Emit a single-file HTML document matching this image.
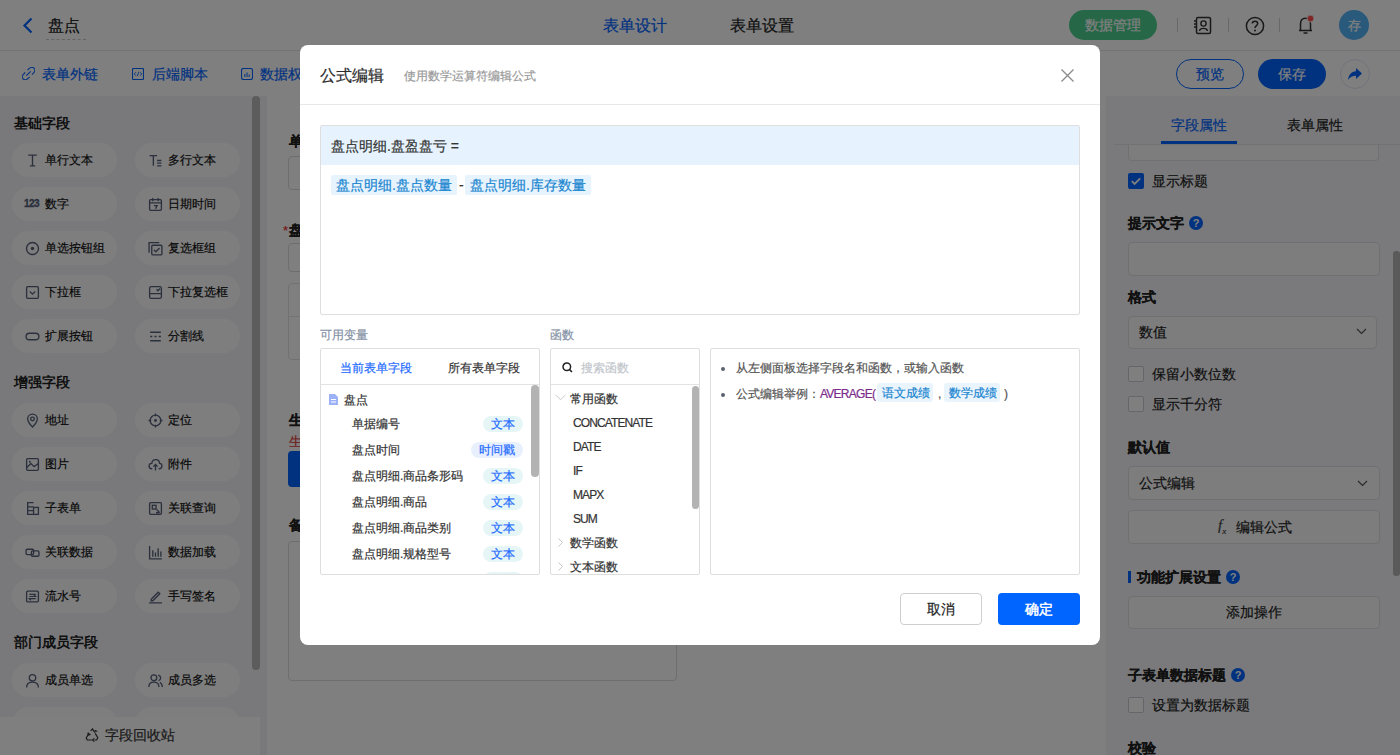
<!DOCTYPE html>
<html><head><meta charset="utf-8">
<style>
*{box-sizing:border-box;margin:0;padding:0}
html,body{width:1400px;height:755px;overflow:hidden;background:#fff;font-family:"Liberation Sans",sans-serif;color:#333}
.a{position:absolute}
.t{position:absolute;white-space:nowrap;line-height:1;-webkit-text-stroke:0.2px currentColor}
.pill span,.tg,.tg2,.vt,.fn{-webkit-text-stroke:0.2px currentColor}
#hdr{left:0;top:0;width:1400px;height:51px;background:#fff;border-bottom:1px solid #e4e6ea}
#bar2{left:0;top:51px;width:1400px;height:45px;background:#fff}
#lp{left:0;top:96px;width:268px;height:659px;background:#f2f3f6}
#rp{left:1106px;top:96px;width:294px;height:659px;background:#f4f5f8}
.pill{position:absolute;width:105px;height:34px;border-radius:17px;background:#fdfdfe;font-size:12px;color:#111}
.pill svg{position:absolute;left:13px;top:9.5px}
.pill span{position:absolute;left:33px;top:11px;line-height:12px;white-space:nowrap}
.sec{position:absolute;left:14px;font-size:14px;font-weight:bold;color:#1f1f1f;line-height:14px;white-space:nowrap}
#ov{left:0;top:0;width:1400px;height:755px;background:rgba(0,0,0,.5)}
#modal{left:300px;top:45px;width:800px;height:600px;background:#fff;border-radius:8px;overflow:hidden}
</style></head><body>
<style>
.rq{width:14px;height:14px;border-radius:7px;background:#0064ff;color:#fff;font-size:11px;font-weight:bold;text-align:center;line-height:14px}
.rq::after{content:"?"}
.inp{border:1px solid #e0e1e5;border-radius:4px;background:#fafafb}
.cb{width:16px;height:16px;border:1px solid #c9ccd3;border-radius:2px;background:#fff}
.tg{position:absolute;height:20px;background:#e8f4fd;color:#1a86d0;font-size:14px;line-height:20px;padding-left:5px;white-space:nowrap;border-radius:2px}
.tg2{position:absolute;height:19px;background:#eaf4fd;color:#1a86d0;font-size:12px;line-height:17px;padding-top:2px;padding-left:5px;white-space:nowrap;border-radius:3px}
.vt{position:absolute;height:16px;border-radius:8px;background:#e6f6f6;color:#1f6bff;font-size:12px;line-height:16px;text-align:center;white-space:nowrap}
.fn{position:absolute;left:22px;font-size:12px;color:#333;line-height:12px;letter-spacing:-0.9px;white-space:nowrap}
</style>
</head><body>
<!-- header -->
<div id="hdr" class="a">
  <svg class="a" style="left:22px;top:17px" width="12" height="17" viewBox="0 0 12 17"><path d="M9.5 1.5 L2.5 8.5 L9.5 15.5" fill="none" stroke="#0064ff" stroke-width="2.2"/></svg>
  <div class="t" style="left:48px;top:18px;font-size:16px;color:#222">盘点</div>
  <div class="a" style="left:46px;top:39px;width:40px;height:0;border-top:1px dashed #c8c8c8"></div>
  <div class="t" style="left:603px;top:18px;font-size:16px;color:#0064ff">表单设计</div>
  <div class="t" style="left:730px;top:18px;font-size:16px;color:#222">表单设置</div>
  <div class="a" style="left:1069px;top:10px;width:88px;height:30px;border-radius:15px;background:#4ccf8f"></div>
  <div class="t" style="left:1085px;top:18px;font-size:14px;color:#fff">数据管理</div>
  <div class="a" style="left:1177px;top:18px;width:1px;height:14px;background:#d0d0d0"></div>
  <div class="a" style="left:1228px;top:18px;width:1px;height:14px;background:#d0d0d0"></div>
  <div class="a" style="left:1279px;top:18px;width:1px;height:14px;background:#d0d0d0"></div>
  <svg class="a" style="left:1192px;top:16px" width="20" height="19" viewBox="0 0 20 19"><rect x="4.5" y="1.5" width="14" height="16" rx="1.5" fill="none" stroke="#333" stroke-width="1.5"/><circle cx="11.5" cy="7.5" r="2.6" fill="none" stroke="#333" stroke-width="1.4"/><path d="M7.5 15 C8 11.5 15 11.5 15.5 15" fill="none" stroke="#333" stroke-width="1.4"/><path d="M2 5h3M2 8h3M2 11h3" stroke="#333" stroke-width="1.3"/></svg>
  <svg class="a" style="left:1245px;top:16px" width="20" height="20" viewBox="0 0 20 20"><circle cx="10" cy="10" r="8.6" fill="none" stroke="#333" stroke-width="1.5"/><path d="M7.3 7.6 C7.3 4.6 12.7 4.6 12.7 7.6 C12.7 9.6 10 9.6 10 12" fill="none" stroke="#333" stroke-width="1.5"/><circle cx="10" cy="14.6" r="1" fill="#333"/></svg>
  <svg class="a" style="left:1296px;top:14px" width="20" height="22" viewBox="0 0 20 22"><path d="M3 16.5 h13 M4.5 16.5 V10 C4.5 6.5 6.5 4.2 9.5 4.2 C12.5 4.2 14.5 6.5 14.5 10 V16.5" fill="none" stroke="#333" stroke-width="1.5"/><path d="M7.5 19 h4" stroke="#333" stroke-width="1.5"/><circle cx="14.5" cy="4.5" r="3.4" fill="#ff4d4f" stroke="#fff" stroke-width="0.8"/></svg>
  <div class="a" style="left:1339px;top:10px;width:30px;height:30px;border-radius:15px;background:#52b2f6"></div>
  <div class="t" style="left:1348px;top:19px;font-size:13px;color:#fff">存</div>
</div>
<!-- bar2 -->
<div id="bar2" class="a">
  <svg class="a" style="left:22px;top:16px" width="13" height="13" viewBox="0 0 13 13"><path d="M5.5 3.2 L7.3 1.4 C8.6 0.1 10.9 0.1 12 1.2 C13 2.3 13 4.5 11.7 5.8 L9.9 7.6 M7.6 9.9 L5.8 11.7 C4.5 13 2.3 13 1.2 12 C0.1 10.9 0.1 8.6 1.4 7.3 L3.2 5.5 M4.3 8.7 L8.7 4.3" fill="none" stroke="#0064ff" stroke-width="1.1"/></svg>
  <div class="t" style="left:42px;top:16px;font-size:14px;color:#0064ff">表单外链</div>
  <svg class="a" style="left:132px;top:17px" width="12" height="12" viewBox="0 0 12 12"><rect x="0.5" y="0.5" width="11" height="11" rx="1" fill="none" stroke="#0064ff" stroke-width="1.1"/><path d="M3.8 4.3L2.3 6l1.5 1.7M8.2 4.3L9.7 6 8.2 7.7M6.8 3.8L5.2 8.2" fill="none" stroke="#0064ff" stroke-width="0.9"/></svg>
  <div class="t" style="left:152px;top:16px;font-size:14px;color:#0064ff">后端脚本</div>
  <svg class="a" style="left:241px;top:17px" width="12" height="12" viewBox="0 0 12 12"><rect x="0.5" y="0.5" width="11" height="11" rx="2" fill="none" stroke="#0064ff" stroke-width="1.1"/><path d="M3.8 6v3M6 4.5v4.5M8.2 6.5v2.5" stroke="#0064ff" stroke-width="1"/></svg>
  <div class="t" style="left:260px;top:16px;font-size:14px;color:#0064ff">数据权限</div>
  <div class="a" style="left:1176px;top:8px;width:68px;height:30px;border-radius:15px;border:1px solid #0064ff"></div>
  <div class="t" style="left:1196px;top:16px;font-size:14px;color:#0064ff">预览</div>
  <div class="a" style="left:1258px;top:8px;width:68px;height:30px;border-radius:15px;background:#0064ff"></div>
  <div class="t" style="left:1278px;top:16px;font-size:14px;color:#fff">保存</div>
  <div class="a" style="left:1340px;top:8px;width:30px;height:30px;border-radius:15px;border:1px solid #dfe6f3;background:#fff"></div>
  <svg class="a" style="left:1347px;top:15px" width="16" height="16" viewBox="0 0 16 16"><path d="M9 2 L15 7.5 L9 13 V9.8 C5.5 9.8 3 10.8 1 14 C1.5 9 4.5 5.6 9 5.3 Z" fill="#0064ff"/></svg>
</div>
<div id="lp" class="a">
<div class="sec" style="top:20px">基础字段</div>
<div class="pill" style="left:12px;top:47px"><svg viewBox="0 0 14 14" width="15" height="15"><path d="M3 2h8M7 2v10M4.5 12h5" fill="none" stroke="#56607a" stroke-width="1.25"/></svg><span>单行文本</span></div>
<div class="pill" style="left:135px;top:47px"><svg viewBox="0 0 14 14" width="15" height="15"><path d="M1.5 2.5h7M5 2.5v9.5M8.5 7h4M8.5 9.5h4M8.5 12h4" fill="none" stroke="#56607a" stroke-width="1.25"/></svg><span>多行文本</span></div>
<div class="pill" style="left:12px;top:91px"><svg viewBox="0 0 16 14" width="16" height="14" style="left:12px"><text x="0" y="9.5" font-size="10" font-weight="bold" letter-spacing="-0.5" fill="#56607a" stroke="#56607a" stroke-width="0.35" font-family="Liberation Sans">123</text></svg><span>数字</span></div>
<div class="pill" style="left:135px;top:91px"><svg viewBox="0 0 14 14" width="15" height="15"><rect x="1.5" y="2.5" width="11" height="10" rx="1" fill="none" stroke="#56607a" stroke-width="1.25"/><path d="M1.5 5.5h11M4.5 1v3M9.5 1v3M5.5 8h3l-1.5 3" fill="none" stroke="#56607a" stroke-width="1.25"/></svg><span>日期时间</span></div>
<div class="pill" style="left:12px;top:135px"><svg viewBox="0 0 14 14" width="15" height="15"><circle cx="7" cy="7" r="5.6" fill="none" stroke="#56607a" stroke-width="1.25"/><circle cx="7" cy="7" r="1.6" fill="#56607a"/></svg><span>单选按钮组</span></div>
<div class="pill" style="left:135px;top:135px"><svg viewBox="0 0 14 14" width="15" height="15"><path d="M1 11V1.5h9.5" fill="none" stroke="#56607a" stroke-width="1.25"/><rect x="3.5" y="4" width="9.5" height="9" rx="1" fill="none" stroke="#56607a" stroke-width="1.25"/><path d="M5.5 8.3l1.8 1.8 3.5-3.5" fill="none" stroke="#56607a" stroke-width="1.25"/></svg><span>复选框组</span></div>
<div class="pill" style="left:12px;top:179px"><svg viewBox="0 0 14 14" width="15" height="15"><rect x="1.5" y="1.5" width="11" height="11" rx="1" fill="none" stroke="#56607a" stroke-width="1.25"/><path d="M4.5 6l2.5 2.5 2.5-2.5" fill="none" stroke="#56607a" stroke-width="1.25"/></svg><span>下拉框</span></div>
<div class="pill" style="left:135px;top:179px"><svg viewBox="0 0 14 14" width="15" height="15"><rect x="1.5" y="1.5" width="11" height="11" rx="1.5" fill="none" stroke="#56607a" stroke-width="1.25"/><path d="M1.5 8h11M8 4l1.3 1.3 2-2" fill="none" stroke="#56607a" stroke-width="1.25"/></svg><span>下拉复选框</span></div>
<div class="pill" style="left:12px;top:223px"><svg viewBox="0 0 14 14" width="15" height="15"><rect x="1" y="4" width="12" height="6" rx="3" fill="none" stroke="#56607a" stroke-width="1.25"/></svg><span>扩展按钮</span></div>
<div class="pill" style="left:135px;top:223px"><svg viewBox="0 0 14 14" width="15" height="15"><path d="M2 3h10M2 7h2M6 7h2M10 7h2M2 11h10" fill="none" stroke="#56607a" stroke-width="1.25"/></svg><span>分割线</span></div>
<div class="sec" style="top:279px">增强字段</div>
<div class="pill" style="left:12px;top:307px"><svg viewBox="0 0 14 14" width="15" height="15"><path d="M7 13C7 13 2.5 8.5 2.5 5.5C2.5 3 4.5 1 7 1C9.5 1 11.5 3 11.5 5.5C11.5 8.5 7 13 7 13Z" fill="none" stroke="#56607a" stroke-width="1.25"/><circle cx="7" cy="5.5" r="1.7" fill="none" stroke="#56607a" stroke-width="1.25"/></svg><span>地址</span></div>
<div class="pill" style="left:135px;top:307px"><svg viewBox="0 0 14 14" width="15" height="15"><circle cx="7" cy="7" r="5" fill="none" stroke="#56607a" stroke-width="1.25"/><circle cx="7" cy="7" r="1.3" fill="#56607a"/><path d="M7 0.5v2.5M7 11v2.5M0.5 7h2.5M11 7h2.5" fill="none" stroke="#56607a" stroke-width="1.25"/></svg><span>定位</span></div>
<div class="pill" style="left:12px;top:351px"><svg viewBox="0 0 14 14" width="15" height="15"><rect x="1.5" y="1.5" width="11" height="11" rx="1" fill="none" stroke="#56607a" stroke-width="1.25"/><path d="M1.5 10l4-4 3 3 4-3" fill="none" stroke="#56607a" stroke-width="1.25"/><circle cx="4.5" cy="4.5" r="0.9" fill="#56607a"/></svg><span>图片</span></div>
<div class="pill" style="left:135px;top:351px"><svg viewBox="0 0 14 14" width="15" height="15"><path d="M4 11H3.5C2 11 1 9.8 1 8.5C1 7 2.2 6 3.5 6C3.8 3.8 5.3 2.5 7.2 2.5C9.2 2.5 10.7 4 10.8 6C12 6 13 7 13 8.5C13 9.9 12 11 10.5 11H10M7 12.5V7M5 9l2-2 2 2" fill="none" stroke="#56607a" stroke-width="1.25"/></svg><span>附件</span></div>
<div class="pill" style="left:12px;top:395px"><svg viewBox="0 0 14 14" width="15" height="15"><path d="M8 1.5H2.5V12.5H8M2.5 5.5H8M2.5 9H8" fill="none" stroke="#56607a" stroke-width="1.25"/><rect x="8" y="6" width="4.5" height="6.5" fill="none" stroke="#56607a" stroke-width="1.25"/></svg><span>子表单</span></div>
<div class="pill" style="left:135px;top:395px"><svg viewBox="0 0 14 14" width="15" height="15"><rect x="1.5" y="1.5" width="11" height="11" rx="1" fill="none" stroke="#56607a" stroke-width="1.25"/><rect x="4" y="4" width="3.5" height="3.5" fill="none" stroke="#56607a" stroke-width="1.25"/><path d="M8 8l3 3M7.5 11h3" fill="none" stroke="#56607a" stroke-width="1.25"/></svg><span>关联查询</span></div>
<div class="pill" style="left:12px;top:439px"><svg viewBox="0 0 14 14" width="15" height="15"><rect x="1" y="4" width="7" height="5" rx="1" fill="none" stroke="#56607a" stroke-width="1.25"/><rect x="6" y="5.5" width="7" height="5" rx="1" fill="none" stroke="#56607a" stroke-width="1.25"/></svg><span>关联数据</span></div>
<div class="pill" style="left:135px;top:439px"><svg viewBox="0 0 14 14" width="15" height="15"><path d="M1.5 1v12h11.5M4.5 5v6M7 7v4M9.5 3v8M12 6v5" fill="none" stroke="#56607a" stroke-width="1.25"/></svg><span>数据加载</span></div>
<div class="pill" style="left:12px;top:483px"><svg viewBox="0 0 14 14" width="15" height="15"><rect x="1.5" y="2" width="11" height="10" rx="1" fill="none" stroke="#56607a" stroke-width="1.25"/><path d="M4 5h6M4 7h6l-1.5-1.5M10 9H4l1.5 1.5" fill="none" stroke="#56607a" stroke-width="1.1"/></svg><span>流水号</span></div>
<div class="pill" style="left:135px;top:483px"><svg viewBox="0 0 14 14" width="15" height="15"><path d="M3 9.5L9.5 3l1.5 1.5L4.5 11H3z M1 13h12" fill="none" stroke="#56607a" stroke-width="1.25"/></svg><span>手写签名</span></div>
<div class="sec" style="top:539px">部门成员字段</div>
<div class="pill" style="left:12px;top:567px"><svg viewBox="0 0 14 14" width="15" height="15"><circle cx="7" cy="4.5" r="3" fill="none" stroke="#56607a" stroke-width="1.25"/><path d="M1.5 13.5C1.5 10 4 8.5 7 8.5C10 8.5 12.5 10 12.5 13.5" fill="none" stroke="#56607a" stroke-width="1.25"/></svg><span>成员单选</span></div>
<div class="pill" style="left:135px;top:567px"><svg viewBox="0 0 14 14" width="15" height="15"><circle cx="5.5" cy="4.5" r="2.7" fill="none" stroke="#56607a" stroke-width="1.25"/><path d="M0.8 13C0.8 10 2.8 8.5 5.5 8.5C8.2 8.5 10.2 10 10.2 13M9.5 2C11 2.3 11.8 3.3 11.8 4.6C11.8 5.9 11 6.8 9.8 7.1M11 8.7C12.5 9.3 13.4 10.8 13.4 13" fill="none" stroke="#56607a" stroke-width="1.25"/></svg><span>成员多选</span></div>
<div class="pill" style="left:12px;top:611px"><svg viewBox="0 0 14 14" width="15" height="15"><circle cx="7" cy="4.5" r="3" fill="none" stroke="#56607a" stroke-width="1.25"/><path d="M1.5 13.5C1.5 10 4 8.5 7 8.5C10 8.5 12.5 10 12.5 13.5" fill="none" stroke="#56607a" stroke-width="1.25"/></svg><span>部门单选</span></div>
<div class="pill" style="left:135px;top:611px"><svg viewBox="0 0 14 14" width="15" height="15"><circle cx="5.5" cy="4.5" r="2.7" fill="none" stroke="#56607a" stroke-width="1.25"/><path d="M0.8 13C0.8 10 2.8 8.5 5.5 8.5C8.2 8.5 10.2 10 10.2 13M9.5 2C11 2.3 11.8 3.3 11.8 4.6C11.8 5.9 11 6.8 9.8 7.1M11 8.7C12.5 9.3 13.4 10.8 13.4 13" fill="none" stroke="#56607a" stroke-width="1.25"/></svg><span>部门多选</span></div>
<div class="a" style="left:252px;top:0px;width:8px;height:574px;border-radius:4px;background:#b9b9b9"></div>
<div class="a" style="left:0;top:621px;width:260px;height:38px;background:#fff"></div>
<svg class="a" style="left:85px;top:632px" width="15" height="14" viewBox="0 0 15 14"><path d="M5.6 2.8L7.5 0.9 9.1 3.6M10.2 5.4l2.6 4.4-1.2 2.2H9.3M6.8 12H2.3L1.2 10l1.9-3.3M4.2 4.9L2.9 7.1" fill="none" stroke="#333" stroke-width="1.2"/><path d="M9.3 10.4l-1.8 1.6 1.8 1.6M2.9 4.7l0.4 2.4 2.3-0.7M9.6 4.9l0.6-2.3 2.1 0.9" fill="none" stroke="#333" stroke-width="1.1"/></svg>
<div class="t" style="left:105px;top:632px;font-size:14px;color:#333">字段回收站</div>
</div><!-- center form -->
<div class="a" style="left:267px;top:96px;width:839px;height:659px;background:#fff">
  <div class="t" style="left:22px;top:38px;font-size:14px;font-weight:bold;color:#222">单据编号</div>
  <div class="a" style="left:21px;top:60px;width:389px;height:34px;border:1px solid #dcdcdc;border-radius:4px"></div>
  <div class="t" style="left:16px;top:128px;font-size:13px;color:#e33">*</div>
  <div class="t" style="left:22px;top:127px;font-size:14px;font-weight:bold;color:#222">盘点时间</div>
  <div class="a" style="left:21px;top:147px;width:389px;height:29px;border:1px solid #dcdcdc;border-radius:4px"></div>
  <div class="a" style="left:21px;top:187px;width:389px;height:77px;border:1px solid #e2e2e2;border-radius:4px"></div>
  <div class="a" style="left:21px;top:220px;width:389px;height:1px;background:#e6e6e6"></div>
  <div class="t" style="left:22px;top:317px;font-size:14px;font-weight:bold;color:#222">生成盘点单</div>
  <div class="t" style="left:22px;top:339px;font-size:13px;color:#e03c3c">生成说明</div>
  <div class="a" style="left:21px;top:355px;width:100px;height:36px;border-radius:4px;background:#0064ff"></div>
  <div class="t" style="left:22px;top:422px;font-size:14px;font-weight:bold;color:#222">备注</div>
  <div class="a" style="left:21px;top:445px;width:389px;height:140px;border:1px solid #dcdcdc;border-radius:4px"></div>
</div>
<!-- right panel -->
<div id="rp" class="a">
  <div class="t" style="left:65px;top:22px;font-size:14px;color:#0064ff">字段属性</div>
  <div class="t" style="left:181px;top:22px;font-size:14px;color:#222">表单属性</div>
  <div class="a" style="left:8px;top:48px;width:286px;height:1px;background:#e3e4e8"></div>
  <div class="a" style="left:55px;top:45px;width:76px;height:3px;background:#0064ff"></div>
  <div class="a" style="left:22px;top:49px;width:251px;height:16px;border:1px solid #e0e1e5;border-top:none;border-radius:0 0 4px 4px;background:#fafafb"></div>
  <div class="a" style="left:22px;top:77px;width:16px;height:16px;border-radius:2px;background:#0064ff"></div>
  <svg class="a" style="left:22px;top:77px" width="16" height="16" viewBox="0 0 16 16"><path d="M3.8 8.2l2.8 2.8 5.6-5.6" fill="none" stroke="#fff" stroke-width="1.8"/></svg>
  <div class="t" style="left:46px;top:78px;font-size:14px;color:#222">显示标题</div>
  <div class="t" style="left:22px;top:120px;font-size:14px;font-weight:bold;color:#222">提示文字</div>
  <div class="a rq" style="left:83px;top:120px"></div>
  <div class="a inp" style="left:22px;top:146px;width:252px;height:34px"></div>
  <div class="t" style="left:22px;top:194px;font-size:14px;font-weight:bold;color:#222">格式</div>
  <div class="a inp" style="left:22px;top:220px;width:249px;height:33px"></div>
  <div class="t" style="left:33px;top:229px;font-size:14px;color:#222">数值</div>
  <svg class="a" style="left:250px;top:232px" width="11" height="7" viewBox="0 0 11 7"><path d="M1 1l4.5 4.5L10 1" fill="none" stroke="#555" stroke-width="1.2"/></svg>
  <div class="a cb" style="left:22px;top:270px"></div>
  <div class="t" style="left:46px;top:271px;font-size:14px;color:#222">保留小数位数</div>
  <div class="a cb" style="left:22px;top:300px"></div>
  <div class="t" style="left:46px;top:301px;font-size:14px;color:#222">显示千分符</div>
  <div class="t" style="left:22px;top:344px;font-size:14px;font-weight:bold;color:#222">默认值</div>
  <div class="a inp" style="left:22px;top:370px;width:252px;height:34px"></div>
  <div class="t" style="left:33px;top:380px;font-size:14px;color:#222">公式编辑</div>
  <svg class="a" style="left:251px;top:384px" width="11" height="7" viewBox="0 0 11 7"><path d="M1 1l4.5 4.5L10 1" fill="none" stroke="#555" stroke-width="1.2"/></svg>
  <div class="a inp" style="left:22px;top:414px;width:252px;height:34px"></div>
  <div class="t" style="left:112px;top:422px;font-size:15px;font-style:italic;font-family:'Liberation Serif',serif;color:#444">f<sub style="font-size:9px">x</sub></div>
  <div class="t" style="left:130px;top:424px;font-size:14px;color:#222">编辑公式</div>
  <div class="a" style="left:22px;top:475px;width:3px;height:12px;background:#0064ff"></div>
  <div class="t" style="left:31px;top:474px;font-size:14px;font-weight:bold;color:#222">功能扩展设置</div>
  <div class="a rq" style="left:120px;top:474px"></div>
  <div class="a inp" style="left:22px;top:500px;width:252px;height:33px"></div>
  <div class="t" style="left:120px;top:509px;font-size:14px;color:#222">添加操作</div>
  <div class="t" style="left:22px;top:572px;font-size:14px;font-weight:bold;color:#222">子表单数据标题</div>
  <div class="a rq" style="left:125px;top:572px"></div>
  <div class="a cb" style="left:22px;top:601px"></div>
  <div class="t" style="left:46px;top:602px;font-size:14px;color:#222">设置为数据标题</div>
  <div class="t" style="left:22px;top:645px;font-size:14px;font-weight:bold;color:#222">校验</div>
  <div class="a" style="left:287px;top:155px;width:7px;height:325px;border-radius:3px;background:#b5b5b5"></div>
</div>
<div id="ov" class="a"></div>
<div id="modal" class="a">
  <div class="t" style="left:20px;top:23px;font-size:16px;color:#2b2b2b">公式编辑</div>
  <div class="t" style="left:104px;top:25px;font-size:12px;color:#9a9a9a">使用数学运算符编辑公式</div>
  <svg class="a" style="left:760px;top:23px" width="15" height="15" viewBox="0 0 15 15"><path d="M1.5 1.5l12 12M13.5 1.5l-12 12" stroke="#8c8c8c" stroke-width="1.4"/></svg>
  <div class="a" style="left:0;top:59px;width:800px;height:1px;background:#e8e8e8"></div>
  <!-- formula box -->
  <div class="a" style="left:20px;top:80px;width:760px;height:190px;border:1px solid #dedede;border-radius:2px"></div>
  <div class="a" style="left:21px;top:81px;width:758px;height:39px;background:#e6f3fe"></div>
  <div class="t" style="left:31px;top:94px;font-size:14px;color:#333">盘点明细.盘盈盘亏 =</div>
  <div class="tg" style="left:31px;top:130px;width:126px">盘点明细.盘点数量</div>
  <div class="t" style="left:159px;top:133px;font-size:14px;color:#333">-</div>
  <div class="tg" style="left:165px;top:130px;width:126px">盘点明细.库存数量</div>
  <!-- labels -->
  <div class="t" style="left:20px;top:284px;font-size:12px;color:#8592a6">可用变量</div>
  <div class="t" style="left:250px;top:284px;font-size:12px;color:#8592a6">函数</div>
  <!-- variables -->
  <div class="a" style="left:20px;top:303px;width:220px;height:227px;border:1px solid #dedede;border-radius:2px;overflow:hidden">
    <div class="t" style="left:19px;top:13px;font-size:12px;color:#1f6bff">当前表单字段</div>
    <div class="t" style="left:127px;top:13px;font-size:12px;color:#333">所有表单字段</div>
    <div class="a" style="left:0;top:35px;width:218px;height:1px;background:#e3e3e3"></div>
    <svg class="a" style="left:7px;top:45px" width="11" height="11" viewBox="0 0 11 11"><path d="M1 0h6l3 3v8H1z" fill="#9db1f7"/><path d="M3 5.5h5M3 8h5" stroke="#fff" stroke-width="1"/></svg>
    <div class="t" style="left:23px;top:45px;font-size:12px;color:#333">盘点</div>
    <div class="t" style="left:31px;top:69px;font-size:12px;color:#333">单据编号</div>
<div class="vt" style="left:162px;top:67px;width:40px">文本</div>
<div class="t" style="left:31px;top:95px;font-size:12px;color:#333">盘点时间</div>
<div class="vt" style="left:150px;top:93px;width:52px;background:#e8f0fe">时间戳</div>
<div class="t" style="left:31px;top:121px;font-size:12px;color:#333">盘点明细.商品条形码</div>
<div class="vt" style="left:162px;top:119px;width:40px">文本</div>
<div class="t" style="left:31px;top:147px;font-size:12px;color:#333">盘点明细.商品</div>
<div class="vt" style="left:162px;top:145px;width:40px">文本</div>
<div class="t" style="left:31px;top:173px;font-size:12px;color:#333">盘点明细.商品类别</div>
<div class="vt" style="left:162px;top:171px;width:40px">文本</div>
<div class="t" style="left:31px;top:199px;font-size:12px;color:#333">盘点明细.规格型号</div>
<div class="vt" style="left:162px;top:197px;width:40px">文本</div>
<div class="t" style="left:31px;top:225px;font-size:12px;color:#333">盘点明细.盘点数量</div>
<div class="vt" style="left:162px;top:223px;width:40px">数字</div>
    <div class="a" style="left:210px;top:36px;width:8px;height:92px;border-radius:4px;background:#b3b3b3"></div>
  </div>
  <!-- functions -->
  <div class="a" style="left:250px;top:303px;width:150px;height:227px;border:1px solid #dedede;border-radius:2px;overflow:hidden">
    <svg class="a" style="left:11px;top:13px" width="11" height="11" viewBox="0 0 11 11"><circle cx="4.8" cy="4.8" r="3.8" fill="none" stroke="#222" stroke-width="1.5"/><path d="M7.6 7.6l2.4 2.4" stroke="#222" stroke-width="1.5"/></svg>
    <div class="t" style="left:30px;top:13px;font-size:12px;color:#c2c6cc">搜索函数</div>
    <div class="a" style="left:0;top:35px;width:148px;height:1px;background:#e3e3e3"></div>
    <svg class="a" style="left:4px;top:45px" width="11" height="7" viewBox="0 0 11 7"><path d="M0.5 0.8l5 5 5-5" fill="none" stroke="#c8c8c8" stroke-width="1"/></svg>
    <div class="t" style="left:19px;top:44px;font-size:12px;color:#333">常用函数</div>
    <div class="fn" style="top:68px">CONCATENATE</div>
    <div class="fn" style="top:92px">DATE</div>
    <div class="fn" style="top:116px">IF</div>
    <div class="fn" style="top:140px">MAPX</div>
    <div class="fn" style="top:164px">SUM</div>
    <svg class="a" style="left:7px;top:189px" width="5" height="9" viewBox="0 0 5 9"><path d="M0.5 0.5l4 4-4 4" fill="none" stroke="#c8c8c8" stroke-width="1"/></svg>
    <div class="t" style="left:19px;top:188px;font-size:12px;color:#333">数学函数</div>
    <svg class="a" style="left:7px;top:213px" width="5" height="9" viewBox="0 0 5 9"><path d="M0.5 0.5l4 4-4 4" fill="none" stroke="#c8c8c8" stroke-width="1"/></svg>
    <div class="t" style="left:19px;top:212px;font-size:12px;color:#333">文本函数</div>
    <div class="a" style="left:141px;top:37px;width:7px;height:123px;border-radius:4px;background:#b3b3b3"></div>
  </div>
  <!-- help -->
  <div class="a" style="left:410px;top:303px;width:370px;height:227px;border:1px solid #dedede;border-radius:2px">
    <div class="a" style="left:10px;top:18px;width:4px;height:4px;border-radius:2px;background:#5a6170"></div>
    <div class="t" style="left:25px;top:13px;font-size:12px;color:#555">从左侧面板选择字段名和函数，或输入函数</div>
    <div class="a" style="left:10px;top:44px;width:4px;height:4px;border-radius:2px;background:#5a6170"></div>
    <div class="t" style="left:25px;top:39px;font-size:12px;color:#555">公式编辑举例：<span style="color:#7b2a8c;letter-spacing:-0.75px">AVERAGE(</span></div>
    <div class="tg2" style="left:166px;top:34px;width:56px">语文成绩</div>
    <div class="t" style="left:227px;top:39px;font-size:12px;color:#555">,</div>
    <div class="tg2" style="left:233px;top:34px;width:56px">数学成绩</div>
    <div class="t" style="left:293px;top:39px;font-size:12px;color:#555">)</div>
  </div>
  <div class="a" style="left:600px;top:548px;width:82px;height:32px;border:1px solid #cfcfcf;border-radius:4px"></div>
  <div class="t" style="left:627px;top:557px;font-size:14px;color:#222">取消</div>
  <div class="a" style="left:698px;top:548px;width:82px;height:32px;border-radius:4px;background:#0064ff"></div>
  <div class="t" style="left:725px;top:557px;font-size:14px;color:#fff;-webkit-text-stroke:0.45px #fff">确定</div>
</div>
</body></html>
